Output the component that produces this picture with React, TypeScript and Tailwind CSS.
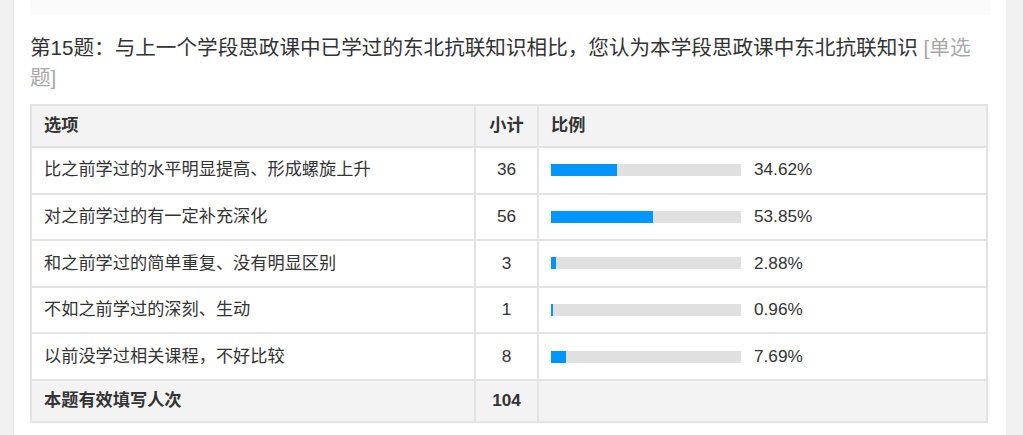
import React from "react";

interface Row {
  label: string;
  count: number;
  pct: number;
}

const rows: Row[] = [
  { label: "比之前学过的水平明显提高、形成螺旋上升", count: 36, pct: 34.62 },
  { label: "对之前学过的有一定补充深化", count: 56, pct: 53.85 },
  { label: "和之前学过的简单重复、没有明显区别", count: 3, pct: 2.88 },
  { label: "不如之前学过的深刻、生动", count: 1, pct: 0.96 },
  { label: "以前没学过相关课程，不好比较", count: 8, pct: 7.69 },
];

export default function App() {
  return (
    <div
      className="flex h-[435px] w-full bg-[#f1f1f1] pl-[13px] pr-[17px] text-[#333]"
      style={{ fontFamily: '"Liberation Sans", Arial, "Noto Sans CJK SC", sans-serif' }}
    >
      <div className="flex-1 border-l border-[#e6e6e6] bg-white">
        {/* tail of previous block */}
        <div className="mx-[16px] h-[15px] bg-[#fbfbfb]" />

        <div className="mx-[16px]">
          <div className="mt-[18px] text-[20.6px] leading-[30px] text-[#333]">
            第15题：与上一个学段思政课中已学过的东北抗联知识相比，您认为本学段思政课中东北抗联知识{" "}
            <span className="text-[#a8a8a8]">[单选题]</span>
          </div>

          <table className="mt-[11px] w-[958px] border-collapse text-[17.2px]">
            <thead>
              <tr className="h-[42px] bg-[#f3f3f3]">
                <th className="w-[444px] border-2 border-[#e3e3e3] pl-[12px] text-left font-bold">选项</th>
                <th className="w-[63px] border-2 border-[#e3e3e3] text-center font-bold">小计</th>
                <th className="border-2 border-[#e3e3e3] pl-[12px] text-left font-bold">比例</th>
              </tr>
            </thead>
            <tbody>
              {rows.map((r) => (
                <tr key={r.label} className="h-[46.6px]">
                  <td className="border-2 border-[#e3e3e3] pl-[12px]">{r.label}</td>
                  <td className="border-2 border-[#e3e3e3] text-center">{r.count}</td>
                  <td className="border-2 border-[#e3e3e3] pl-[12px]">
                    <div className="flex items-center">
                      <div className="h-[12px] w-[190px] bg-[#e0e0e0]">
                        <div className="h-full bg-[#0095ff]" style={{ width: `${Math.max(r.pct, 1)}%` }} />
                      </div>
                      <span className="ml-[13px]">{r.pct.toFixed(2)}%</span>
                    </div>
                  </td>
                </tr>
              ))}
              <tr className="h-[42px] bg-[#f3f3f3]">
                <td className="border-2 border-[#e3e3e3] pl-[12px] font-bold">本题有效填写人次</td>
                <td className="border-2 border-[#e3e3e3] text-center font-bold">104</td>
                <td className="border-2 border-[#e3e3e3]" />
              </tr>
            </tbody>
          </table>
        </div>
      </div>
    </div>
  );
}
